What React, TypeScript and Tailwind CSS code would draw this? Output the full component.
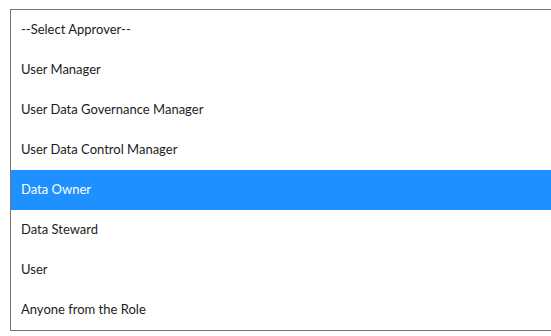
const OPTIONS = [
  "--Select Approver--",
  "User Manager",
  "User Data Governance Manager",
  "User Data Control Manager",
  "Data Owner",
  "Data Steward",
  "User",
  "Anyone from the Role",
];

export default function App() {
  const selected = "Data Owner";
  return (
    <div className="w-[551px] h-[336px] bg-white overflow-hidden pt-[9px] pl-[10px]">
      <ul
        className="w-[560px] border border-[#767676] bg-white text-[13px] text-[#1c1c1c]"
        style={{ fontFamily: 'Lato, "Liberation Sans", sans-serif' }}
      >
        {OPTIONS.map((o) => (
          <li
            key={o}
            className={`h-[40px] flex items-center pl-[10px] ${o === selected ? "bg-[#1e90ff] text-white" : ""}`}
          >
            {o}
          </li>
        ))}
      </ul>
    </div>
  );
}
